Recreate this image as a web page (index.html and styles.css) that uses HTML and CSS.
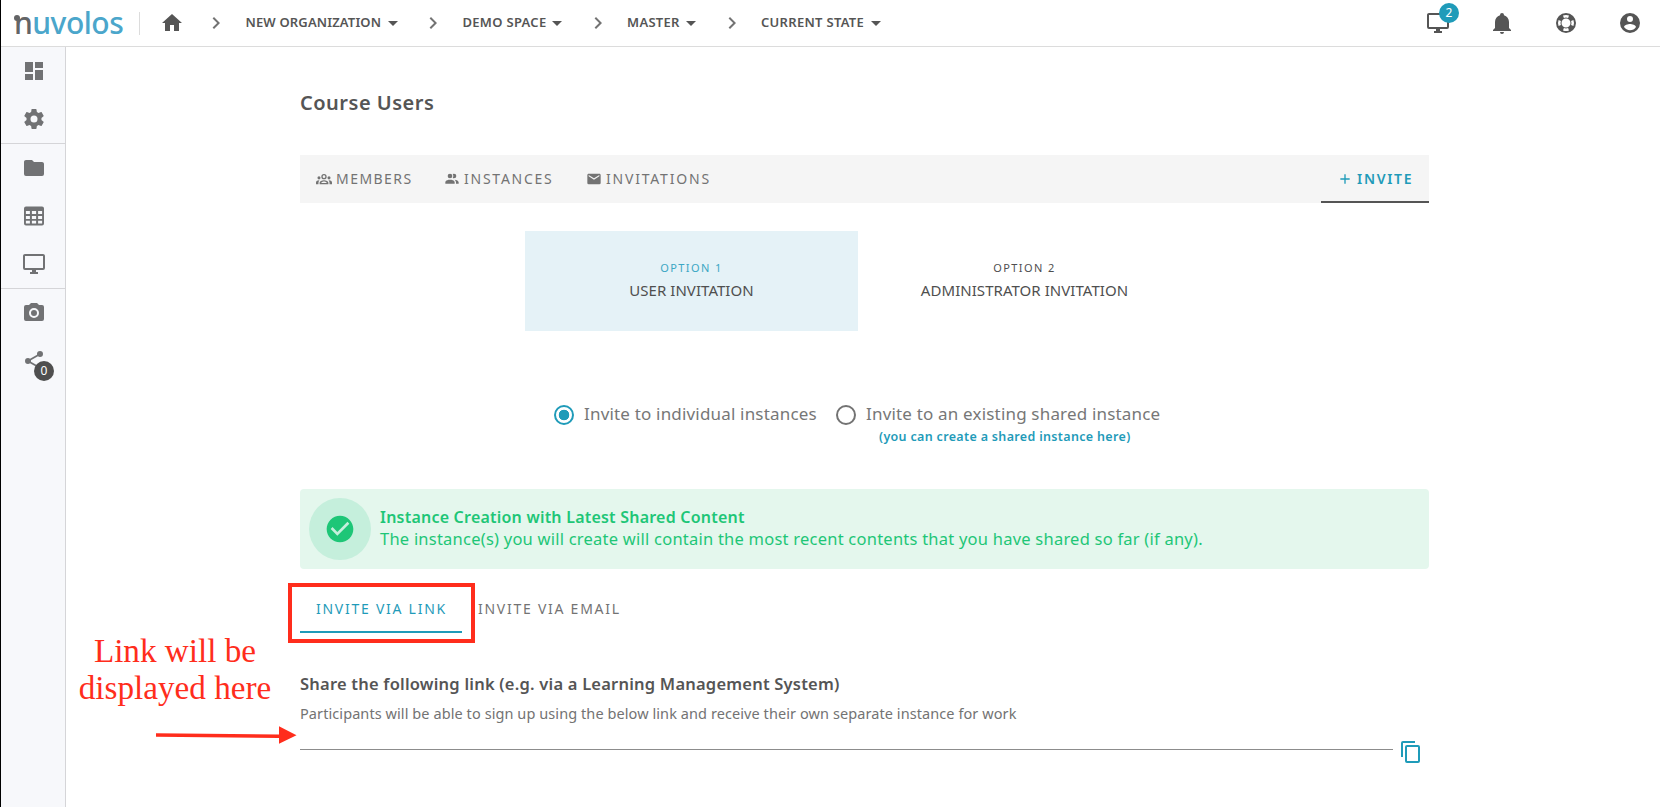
FILE: index.html
```html
<!DOCTYPE html>
<html lang="en">
<head>
<meta charset="utf-8">
<title>Nuvolos - Course Users</title>
<link rel="stylesheet" href="styles.css">
</head>
<body>
<div class="app">
  <header class="topbar">
    <div class="logo"><span class="logo-n">n</span>uvolos</div>
    <div class="divider"></div>
    <svg class="icon home" viewBox="0 0 24 24"><path d="M10 20v-6h4v6h5v-8h3L12 3 2 12h3v8z"/></svg>
    <nav class="crumbs">
      <svg class="icon chev" viewBox="0 0 24 24"><path d="M8.59 16.58 13.17 12 8.59 7.41 10 6l6 6-6 6z"/></svg>
      <span class="crumb c-org">NEW ORGANIZATION</span><svg class="icon" viewBox="0 0 24 24"><path d="m7 10 5 5 5-5z"/></svg>
      <svg class="icon chev" viewBox="0 0 24 24"><path d="M8.59 16.58 13.17 12 8.59 7.41 10 6l6 6-6 6z"/></svg>
      <span class="crumb c-space">DEMO SPACE</span><svg class="icon" viewBox="0 0 24 24"><path d="m7 10 5 5 5-5z"/></svg>
      <svg class="icon chev" viewBox="0 0 24 24"><path d="M8.59 16.58 13.17 12 8.59 7.41 10 6l6 6-6 6z"/></svg>
      <span class="crumb c-master">MASTER</span><svg class="icon" viewBox="0 0 24 24"><path d="m7 10 5 5 5-5z"/></svg>
      <svg class="icon chev" viewBox="0 0 24 24"><path d="M8.59 16.58 13.17 12 8.59 7.41 10 6l6 6-6 6z"/></svg>
      <span class="crumb c-state">CURRENT STATE</span><svg class="icon" viewBox="0 0 24 24"><path d="m7 10 5 5 5-5z"/></svg>
    </nav>
    <div class="actions">
      <div class="action"><svg class="icon" viewBox="0 0 24 24"><path d="M21 16H3V4h18m0-2H3c-1.11 0-2 .89-2 2v12a2 2 0 0 0 2 2h7v2H8v2h8v-2h-2v-2h7a2 2 0 0 0 2-2V4c0-1.11-.9-2-2-2z"/></svg><span class="badge badge-blue">2</span></div>
      <div class="action"><svg class="icon" viewBox="0 0 24 24"><path d="M21 19v1H3v-1l2-2v-6c0-3.1 2.03-5.83 5-6.71V4a2 2 0 0 1 4 0v.29c2.97.88 5 3.61 5 6.71v6l2 2m-7 2a2 2 0 0 1-4 0"/></svg></div>
      <div class="action"><svg class="icon" viewBox="0 0 24 24"><path fill-rule="evenodd" d="M12 2a10 10 0 1 0 0 20 10 10 0 0 0 0-20zm0 5.500a4.500 4.500 0 1 1 0 9 4.500 4.500 0 0 1 0-9zM9 4.600a8 8 0 0 1 6 0l-.9 2.300a5.600 5.600 0 0 0-4.200 0zM9 19.400a8 8 0 0 0 6 0l-.9-2.300a5.600 5.600 0 0 1-4.200 0zM4.600 9a8 8 0 0 0 0 6l2.300-.9a5.600 5.600 0 0 1 0-4.200zM19.400 9a8 8 0 0 1 0 6l-2.300-.9a5.600 5.600 0 0 0 0-4.200z"/></svg></div>
      <div class="action"><svg class="icon" viewBox="0 0 24 24"><path d="M12 19.200c-2.500 0-4.710-1.280-6-3.200.03-2 4-3.100 6-3.100s5.970 1.100 6 3.100a7.230 7.230 0 0 1-6 3.200M12 5a3 3 0 1 1 0 6 3 3 0 0 1 0-6m0-3a10 10 0 1 0 0 20 10 10 0 0 0 0-20z"/></svg></div>
    </div>
  </header>

  <div class="body">
    <aside class="sidebar">
      <div class="side-item"><svg class="icon" viewBox="0 0 24 24"><path d="M13 3v6h8V3m-8 18h8V11h-8M3 21h8v-6H3m0-2h8V3H3z"/></svg></div>
      <div class="side-item"><svg class="icon" viewBox="0 0 24 24"><path d="M12 15.500A3.500 3.500 0 0 1 8.500 12 3.500 3.500 0 0 1 12 8.500a3.500 3.500 0 0 1 3.500 3.500 3.500 3.500 0 0 1-3.500 3.500m7.430-2.530c.04-.32.07-.64.07-.97s-.03-.66-.07-1l2.110-1.630c.19-.15.24-.42.12-.64l-2-3.460c-.12-.22-.39-.31-.61-.22l-2.490 1c-.52-.39-1.060-.73-1.690-.98l-.37-2.650A.506.506 0 0 0 14 2h-4c-.25 0-.46.18-.5.42l-.37 2.650c-.63.25-1.170.59-1.690.98l-2.490-1c-.22-.09-.49 0-.61.22l-2 3.460c-.13.22-.07.49.12.64L4.570 11c-.04.34-.07.67-.07 1s.03.65.07.97l-2.110 1.660c-.19.15-.25.42-.12.64l2 3.460c.12.22.39.3.61.22l2.490-1.010c.52.4 1.060.74 1.690.99l.37 2.650c.04.24.25.42.5.42h4c.25 0 .46-.18.5-.42l.37-2.650c.63-.26 1.170-.59 1.690-.99l2.490 1.010c.22.08.49 0 .61-.22l2-3.460c.12-.22.07-.49-.12-.64z"/></svg></div>
      <div class="side-sep"></div>
      <div class="side-item"><svg class="icon" viewBox="0 0 24 24"><path d="M10 4H4c-1.110 0-2 .89-2 2v12a2 2 0 0 0 2 2h16a2 2 0 0 0 2-2V8c0-1.110-.9-2-2-2h-8z"/></svg></div>
      <div class="side-item"><svg class="icon" viewBox="0 0 24 24"><path fill-rule="evenodd" d="M4 2.500h16a2 2 0 0 1 2 2v15a2 2 0 0 1-2 2H4a2 2 0 0 1-2-2v-15a2 2 0 0 1 2-2zM3.900 7v3.100h4V7zm6 0v3.100h4.200V7zm6.200 0v3.100h4V7zM3.900 12v2.900h4V12zm6 0v2.900h4.200V12zm6.200 0v2.900h4V12zM3.900 16.800v2.800h4v-2.800zm6 0v2.800h4.200v-2.800zm6.200 0v2.800h4v-2.800z"/></svg></div>
      <div class="side-item"><svg class="icon" viewBox="0 0 24 24"><path d="M21 16H3V4h18m0-2H3c-1.110 0-2 .89-2 2v12a2 2 0 0 0 2 2h7v2H8v2h8v-2h-2v-2h7a2 2 0 0 0 2-2V4c0-1.110-.9-2-2-2z"/></svg></div>
      <div class="side-sep"></div>
      <div class="side-item"><svg class="icon" viewBox="0 0 24 24"><path d="M4 4h3l2-2h6l2 2h3a2 2 0 0 1 2 2v12a2 2 0 0 1-2 2H4a2 2 0 0 1-2-2V6a2 2 0 0 1 2-2m8 3a5 5 0 1 0 0 10 5 5 0 0 0 0-10m0 2a3 3 0 1 1 0 6 3 3 0 0 1 0-6z"/></svg></div>
      <div class="side-item"><svg class="icon" viewBox="0 0 24 24"><path d="M18 16.080c-.76 0-1.440.3-1.960.77L8.910 12.700c.05-.23.09-.46.09-.7s-.04-.47-.09-.7l7.050-4.110c.54.5 1.250.81 2.040.81a3 3 0 1 0-3-3c0 .24.04.47.09.7L8.040 9.810C7.500 9.310 6.790 9 6 9a3 3 0 1 0 0 6c.79 0 1.500-.31 2.040-.81l7.120 4.150c-.05.21-.08.43-.08.66a2.920 2.920 0 1 0 2.920-2.920z"/></svg><span class="badge badge-dark">0</span></div>
    </aside>

    <main class="content">
      <h1 class="title">Course Users</h1>

      <div class="tabs">
        <div class="tab t-members"><svg class="tab-icon" viewBox="0 0 24 24"><path fill-rule="evenodd" d="M12 4.500a4 4 0 1 0 0 8 4 4 0 0 0 0-8zm0 2a2 2 0 1 1 0 4 2 2 0 0 1 0-4zM4.500 8a2.300 2.300 0 1 0 0 4.600 2.300 2.300 0 0 0 0-4.600zm15 0a2.300 2.300 0 1 0 0 4.600 2.300 2.300 0 0 0 0-4.600zM12 13.700c-3.500 0-6.600 1.300-6.600 3.800V20h13.200v-2.500c0-2.500-3.100-3.800-6.600-3.800zm0 1.900c2 0 3.800.8 4.400 2.400H7.600c.6-1.600 2.400-2.400 4.400-2.400zM4.800 14C2.200 14 0 15.100 0 17.300V20h3.700v-2.500c0-1.300.5-2.400 1.300-3.400zm14.400 0c2.600 0 4.800 1.100 4.800 3.300V20h-3.700v-2.500c0-1.300-.5-2.400-1.300-3.400z"/></svg><span class="tab-text">MEMBERS</span></div>
        <div class="tab t-instances"><svg class="tab-icon" viewBox="0 0 24 24"><path d="M16 17v2H2v-2s0-4 7-4 7 4 7 4m-3.500-9.500a3.500 3.500 0 1 0-7 0 3.500 3.500 0 0 0 7 0m3.440 5.500A5.320 5.320 0 0 1 18 17v2h4v-2s0-3.630-6.060-4M15 4a3.390 3.390 0 0 0-1.930.59 5 5 0 0 1 0 5.820A3.390 3.390 0 0 0 15 11a3.500 3.500 0 0 0 0-7z"/></svg><span class="tab-text">INSTANCES</span></div>
        <div class="tab t-invitations"><svg class="tab-icon" viewBox="0 0 24 24"><path d="m20 8-8 5-8-5V6l8 5 8-5m0-2H4c-1.110 0-2 .89-2 2v12a2 2 0 0 0 2 2h16a2 2 0 0 0 2-2V6c0-1.110-.9-2-2-2z"/></svg><span class="tab-text">INVITATIONS</span></div>
        <div class="tab t-invite"><svg class="tab-icon" viewBox="0 0 24 24"><path d="M19 13h-6v6h-2v-6H5v-2h6V5h2v6h6z"/></svg><span class="tab-text">INVITE</span></div>
      </div>

      <div class="options">
        <div class="option selected"><span class="option-no">OPTION 1</span><span class="option-name">USER INVITATION</span></div>
        <div class="option"><span class="option-no">OPTION 2</span><span class="option-name">ADMINISTRATOR INVITATION</span></div>
      </div>

      <div class="radios">
        <div class="radio r-one"><span class="dot on"></span><span class="radio-label">Invite to individual instances</span></div>
        <div class="radio"><span class="dot"></span>
          <div class="radio-stack"><span class="radio-label">Invite to an existing shared instance</span><a class="hint">(you can create a shared instance here)</a></div>
        </div>
      </div>

      <section class="alert">
        <div class="alert-disc"><svg class="alert-icon" viewBox="0 0 24 24"><path d="M12 2C6.500 2 2 6.500 2 12s4.500 10 10 10 10-4.500 10-10S17.500 2 12 2m-2 15-5-5 1.410-1.410L10 14.170l7.590-7.590L19 8z"/></svg></div>
        <div class="alert-copy"><strong class="alert-title">Instance Creation with Latest Shared Content</strong><span class="alert-text">The instance(s) you will create will contain the most recent contents that you have shared so far (if any).</span></div>
      </section>

      <div class="subtabs">
        <div class="subtab active"><span>INVITE VIA LINK</span><div class="marker"></div></div>
        <div class="subtab"><span>INVITE VIA EMAIL</span></div>
      </div>

      <h2 class="share-title">Share the following link (e.g. via a Learning Management System)</h2>
      <p class="share-text">Participants will be able to sign up using the below link and receive their own separate instance for work</p>
      <div class="link-row">
        <div class="link-field"></div>
        <svg class="copy" viewBox="0 0 24 24"><path d="M19 21H8V7h11m0-2H8a2 2 0 0 0-2 2v14a2 2 0 0 0 2 2h11a2 2 0 0 0 2-2V7a2 2 0 0 0-2-2m-3-4H4a2 2 0 0 0-2 2v14h2V3h12z"/></svg>
      </div>
    </main>
  </div>

  <div class="note"><div>Link will be</div><div>displayed here</div></div>
  <svg class="arrow" viewBox="0 0 144 20"><path d="M0 8.200 123 9.500V1.300L140.500 10.300 123 18.700V13L0 11.800z"/></svg>
</div>
</body>
</html>
```
FILE: styles.css
```css
* { box-sizing: border-box; }
body { margin: 0; background: #fff; color: #555; font-family: "Noto Sans", "Open Sans", sans-serif; }
.app { position: relative; width: 1660px; height: 807px; overflow: hidden; border-left: 1px solid #000; display: flex; flex-direction: column; }
.icon { width: 24px; height: 24px; fill: currentColor; flex: none; display: block; }

.topbar { height: 47px; flex: none; display: flex; align-items: center; border-bottom: 1px solid #dcdcdc; color: #555; }
.logo { position: relative; width: 125px; padding-left: 13px; font-size: 30px; line-height: 40px; font-weight: 500; letter-spacing: -.5px; color: #4ba6cb; white-space: nowrap; }
.logo-n { color: #636466; }
.logo-n::before { content: ""; position: absolute; left: 13px; top: 12px; width: 6px; height: 6px; border-radius: 50%; background: #636466; }
.divider { width: 1px; height: 23px; margin: 0 20px 0 13px; background: #dcdcdc; }
.crumbs { display: flex; align-items: center; }
.chev { margin: 0 16.5px; color: #737373; }
.home + .crumbs .chev:first-child { margin-left: 20px; }
.crumb { padding-left: 1px; font-size: 13px; font-weight: 600; line-height: 20px; padding-bottom: 2px; letter-spacing: .3px; white-space: nowrap; }
.c-org { width: 136px; letter-spacing: .15px; }
.c-space { width: 83.5px; }
.c-master { width: 53px; }
.c-state { width: 103.5px; }
.actions { margin-left: auto; margin-right: 18px; display: flex; gap: 40px; }
.action { position: relative; }
.badge { position: absolute; width: 20px; height: 20px; border-radius: 50%; color: #fff; font-size: 12px; line-height: 20px; text-align: center; }
.badge-blue { left: 13px; top: -8px; background: #1f9bb9; }
.badge-dark { left: 33px; top: 24px; background: #4f4f4f; }

.body { flex: 1; display: flex; }
.sidebar { width: 65px; flex: none; background: #f7f8fb; border-right: 1px solid #d5d5d8; color: #717274; }
.side-item { position: relative; height: 48px; display: flex; align-items: center; justify-content: center; padding-left: 1px; }
.side-sep { height: 1px; background: #d5d5d8; }

.content { width: 1129px; margin-left: 234px; }
.title { margin: 40px 0 0; font-size: 20px; line-height: 32px; font-weight: 600; letter-spacing: .5px; color: #555; height: 68px; }
.tabs { display: flex; height: 48px; background: #f5f5f5; color: #737373; font-size: 14px; letter-spacing: 1.45px; }
.tab { display: flex; align-items: center; padding-left: 16px; white-space: nowrap; }
.tab-icon { width: 16px; height: 16px; fill: currentColor; margin-right: 4px; flex: none; }
.tab-text { padding-bottom: 2px; }
.t-members { width: 128px; }
.t-instances { width: 142px; letter-spacing: 1.75px; }
.t-invitations { letter-spacing: 1.8px; }
.t-invite { margin-left: auto; width: 108px; border-bottom: 2px solid #555; color: #1f9bb9; font-weight: 600; padding-top: 2px; letter-spacing: 1.7px; }

.options { display: flex; margin: 28px 0 0 225px; }
.option { width: 333px; height: 100px; padding-top: 28px; display: flex; flex-direction: column; align-items: center; color: #4f4f4f; }
.option.selected { background: #e5f2f7; }
.selected .option-no { color: #3ba7c4; }
.option-no { font-size: 11px; line-height: 18px; letter-spacing: 1.4px; }
.option-name { font-size: 15px; line-height: 22px; margin-top: 2px; letter-spacing: .05px; }

.radios { display: flex; margin: 72px 0 0 254px; height: 86px; }
.radio { display: flex; }
.r-one { width: 282px; }
.dot { width: 20px; height: 20px; border: 2px solid #737373; border-radius: 50%; margin: 2px 10px 0 0; flex: none; }
.dot.on { border-color: #1f9bb9; background: radial-gradient(circle, #1f9bb9 5px, transparent 5.6px); }
.radio-label { font-size: 17px; line-height: 24px; margin-top: -1px; letter-spacing: .18px; color: #777; white-space: nowrap; }
.radio-stack { display: flex; flex-direction: column; }
.hint { font-size: 12.5px; line-height: 18px; margin-top: 2px; font-weight: 600; letter-spacing: .33px; color: #1f9bb9; margin-left: 13px; white-space: nowrap; }

.alert { height: 80px; padding-left: 9px; border-radius: 4px; background: #e4f7ed; display: flex; align-items: center; color: #1ec677; }
.alert-disc { width: 62px; height: 62px; border-radius: 50%; background: #c5efdc; display: flex; align-items: center; justify-content: center; }
.alert-icon { width: 32px; height: 32px; fill: #1ec677; }
.alert-copy { display: flex; flex-direction: column; margin-left: 9px; padding-bottom: 2px; white-space: nowrap; }
.alert-title { font-size: 16px; line-height: 22px; font-weight: 600; letter-spacing: .22px; }
.alert-text { font-size: 16.5px; line-height: 22px; letter-spacing: .23px; }

.subtabs { display: flex; height: 64px; color: #737373; font-size: 14px; letter-spacing: 1.74px; white-space: nowrap; }
.subtab { position: relative; width: 162px; height: 64px; padding: 28px 16px 0; line-height: 24px; }
.subtab.active { color: #1f9bb9; border-bottom: 2px solid #1f9bb9; }
.marker { position: absolute; left: -12.5px; top: 14px; width: 187px; height: 60px; border: 4px solid #ff2d1c; }

.share-title { margin: 39px 0 0; font-size: 16.5px; line-height: 24px; font-weight: 600; letter-spacing: .21px; color: #555; white-space: nowrap; }
.share-text { margin: 6px 0 0; font-size: 14.5px; line-height: 22px; letter-spacing: .08px; color: #737373; white-space: nowrap; }
.link-row { display: flex; margin-top: 15px; }
.link-field { width: 1093px; height: 11px; border-bottom: 1px solid #8c8c8c; }
.copy { width: 24px; height: 24px; margin: 1px 0 0 5.5px; fill: #1f9bb9; }

.note { position: absolute; left: 74px; top: 632px; width: 200px; text-align: center; font-family: "Liberation Serif", serif; font-size: 33.2px; line-height: 37px; color: #ff2d1c; white-space: nowrap; }
.arrow { position: absolute; left: 155px; top: 725px; width: 144px; height: 20px; fill: #ff2d1c; }
```
